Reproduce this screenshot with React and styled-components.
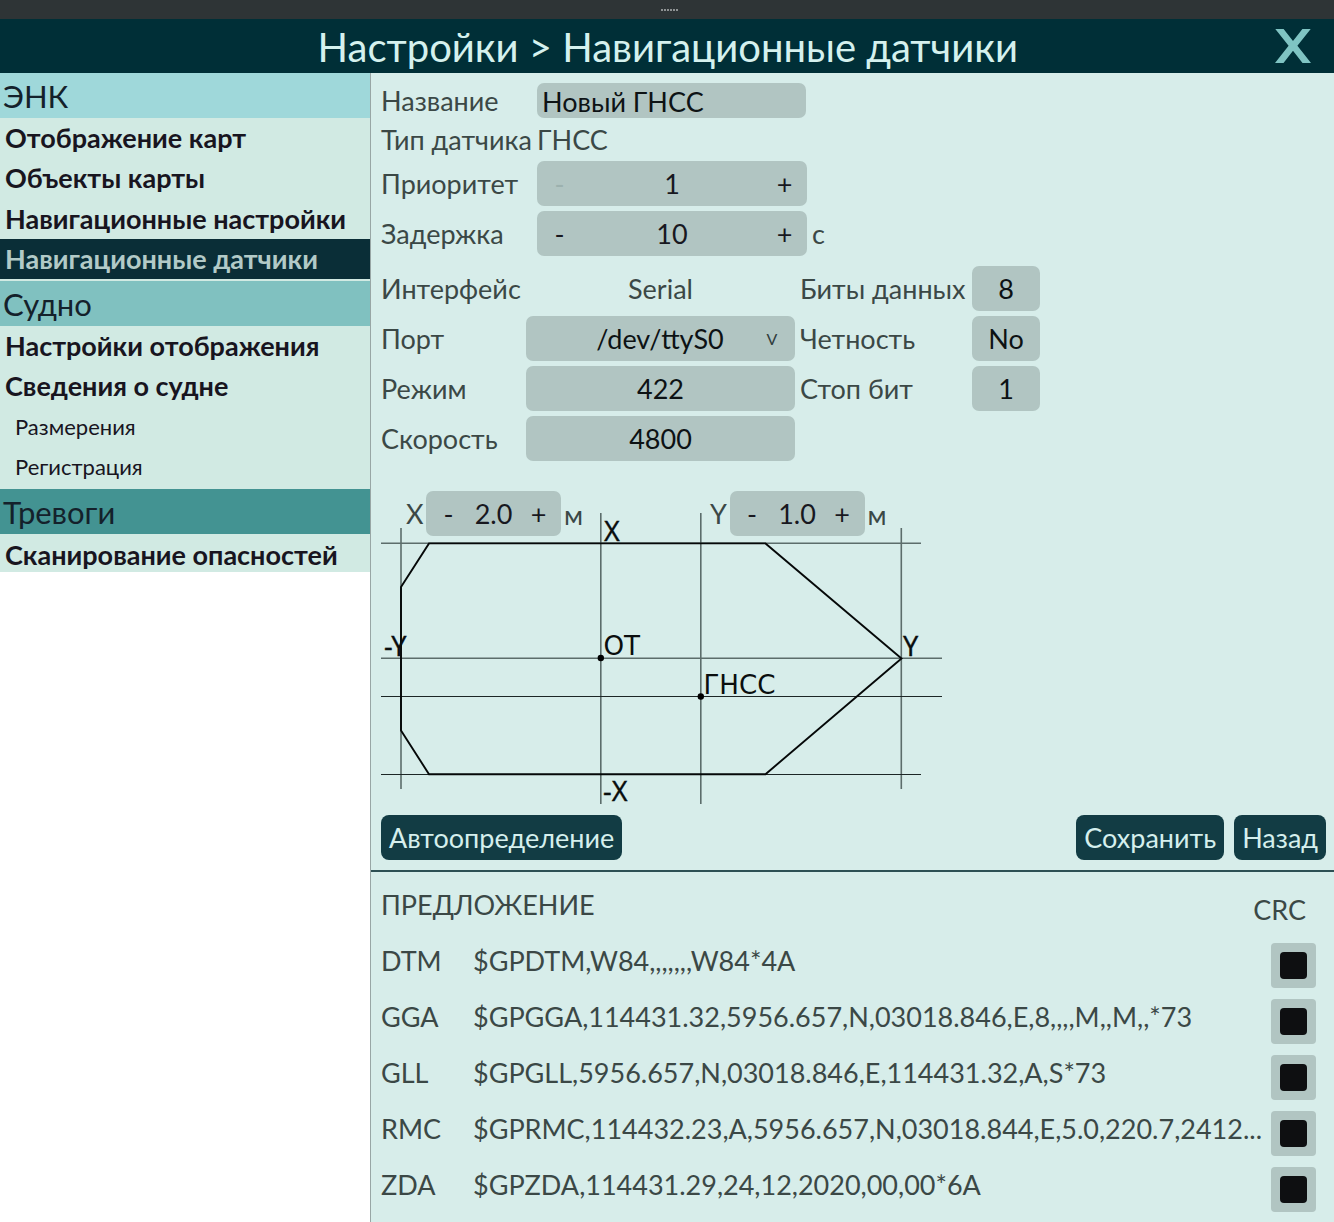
import React, { useState } from "react";
import styled, { createGlobalStyle } from "styled-components";

const GlobalStyle = createGlobalStyle`
  * { box-sizing: border-box; }
  html, body { margin: 0; padding: 0; }
  body {
    width: 1334px;
    height: 1222px;
    overflow: hidden;
    background: #ffffff;
    font-family: Lato, "Noto Sans", sans-serif;
    font-size: 27px;
    color: #3b4846;
  }
  button, input { font: inherit; color: inherit; border: 0; padding: 0; margin: 0; background: none; }
`;

const Screen = styled.div`
  display: flex;
  flex-direction: column;
  width: 1334px;
  height: 1222px;
  overflow: hidden;
`;

const WindowBar = styled.div`
  flex: none;
  display: flex;
  justify-content: center;
  align-items: center;
  gap: 1px;
  height: 19px;
  padding-left: 4px;
  background: #2e3436;
`;

const Grip = styled.i`
  width: 2px;
  height: 2px;
  background: #8e9293;
`;

const Header = styled.header`
  flex: none;
  display: grid;
  grid-template-columns: 1fr 83px;
  height: 54px;
  background: #002f37;
`;

const Title = styled.h1`
  margin: 0;
  padding: 1px 0 0 84.5px;
  text-align: center;
  font-size: 40px;
  line-height: 54px;
  font-weight: 400;
  white-space: nowrap;
  color: #d5f1ee;
`;

const Close = styled.button`
  display: flex;
  justify-content: center;
  align-items: center;
  height: 54px;
  padding-left: 1px;
`;

const Body = styled.div`
  flex: 1;
  display: flex;
  min-height: 0;
`;

const Sidebar = styled.nav`
  flex: none;
  width: 371px;
  border-right: 1px solid #98a6a5;
  background: #ffffff;
`;

const Section = styled.section`
  padding-bottom: ${(p) => (p.$last ? 0 : 2)}px;
  background: #d1eae3;
`;

const SectionTitle = styled.h2`
  margin: 0;
  padding-left: 3px;
  height: 45px;
  line-height: 46px;
  font-size: 31px;
  font-weight: 400;
  color: #14212b;
  background: ${(p) => p.$tone};
`;

const Item = styled.div`
  height: ${(p) => (p.$short ? 38 : 40.25)}px;
  padding-left: ${(p) => (p.$sub ? 15 : 5)}px;
  line-height: ${(p) => (p.$short ? 41 : 40.5)}px;
  font-size: ${(p) => (p.$sub ? 22 : 27)}px;
  font-weight: ${(p) => (p.$sub ? 400 : 700)};
  white-space: nowrap;
  overflow: hidden;
  color: ${(p) => (p.$active ? "#b2cac7" : "#18151f")};
  background: ${(p) => (p.$active ? "#0a2e37" : "transparent")};
`;

const Main = styled.main`
  flex: 1;
  min-width: 0;
  background: #d7edea;
`;

const Settings = styled.section`
  height: 799px;
  padding: 10px 8px 0 10px;
  border-bottom: 2px solid #2d5054;
`;

const General = styled.div`
  display: grid;
  grid-template-columns: 156px 270px auto;
  grid-template-rows: 35px 38px 50px 50px;
  padding-bottom: 10px;
  justify-content: start;
`;

const Label = styled.span`
  line-height: ${(p) => p.$h || 46}px;
  padding-top: ${(p) => p.$drop || 0}px;
  padding-left: ${(p) => p.$indent || 0}px;
  text-align: ${(p) => p.$align || "left"};
  white-space: nowrap;
`;

const NameInput = styled.input`
  width: 269px;
  height: 35px;
  padding: 1px 5px 0;
  border-radius: 7px;
  background: #b1c5c2;
  color: #0e1315;
`;

const Spin = styled.div`
  display: grid;
  grid-template-columns: 45px 1fr 45px;
  width: ${(p) => p.$w}px;
  height: 45px;
  line-height: 45px;
  text-align: center;
  border-radius: 7px;
  background: #b1c5c2;
  color: #18181f;
`;

const SpinButton = styled.button`
  line-height: 45px;
  &:disabled { color: #9cb1ae; }
`;

const Serial = styled.div`
  display: grid;
  grid-template-columns: 145px 269px 5px 172px 68px;
  grid-auto-rows: 45px;
  row-gap: 5px;
  justify-content: start;
`;

const Field = styled.button`
  display: grid;
  grid-template-columns: ${(p) => (p.$drop ? "45px 1fr 46px" : "1fr")};
  align-items: center;
  width: 100%;
  height: 45px;
  border-radius: 7px;
  text-align: center;
  background: #b1c5c2;
  color: #0d1214;
`;

const Arrow = styled.small`
  font-size: 16px;
  color: #323e3e;
`;

const Plan = styled.div`
  position: relative;
  height: 354px;
  padding: 30px 0 0 25px;
`;

const Offsets = styled.div`
  display: grid;
  grid-template-columns: 20px 138px 146px 19.5px 138px auto;
  justify-content: start;
`;

const Drawing = styled.svg`
  position: absolute;
  left: 0;
  top: 50px;
  text {
    font-family: "Noto Sans", sans-serif;
    font-size: 27px;
    fill: #0a0e0e;
    stroke: #0a0e0e;
    stroke-width: 0.3px;
  }
`;

const PointName = styled.text`
  && {
    font-family: "DejaVu Sans", sans-serif;
    font-size: 26.2px;
    stroke: none;
  }
`;

const Actions = styled.div`
  display: flex;
  gap: 10px;
`;

const Action = styled.button`
  height: 45px;
  padding: 0 8px 1px;
  border-radius: 8px;
  white-space: nowrap;
  background: #123c44;
  color: #d5efed;
  &:first-child { margin-right: auto; }
`;

const Log = styled.section`
  display: grid;
  grid-auto-rows: 56px;
  padding: 11px 18px 0 10px;
`;

const LogRow = styled.div`
  display: grid;
  grid-template-columns: 92px 1fr 45px;
  line-height: 44px;
`;

const LogHead = styled.div`
  display: flex;
  justify-content: space-between;
  line-height: 43px;
  padding-right: 10px;
`;

const Sentence = styled.span`
  white-space: nowrap;
`;

const Check = styled.button`
  display: grid;
  place-items: center;
  width: 45px;
  height: 45px;
  margin-top: 4px;
  border-radius: 4px;
  background: #b1c5c2;
  &::after {
    content: "";
    width: 27px;
    height: 27px;
    border-radius: 4px;
    background: #0e0f11;
    visibility: ${(p) => (p.$on ? "visible" : "hidden")};
  }
`;

const menu = [
  { title: "ЭНК", tone: "#9fd8da", items: ["Отображение карт", "Объекты карты", "Навигационные настройки", "Навигационные датчики"] },
  { title: "Судно", tone: "#80c1c0", items: ["Настройки отображения", "Сведения о судне", "-Размерения", "-Регистрация"] },
  { title: "Тревоги", tone: "#439392", items: ["Сканирование опасностей"] },
];

const log = [
  ["DTM", "$GPDTM,W84,,,,,,,W84*4A"],
  ["GGA", "$GPGGA,114431.32,5956.657,N,03018.846,E,8,,,,M,,M,,*73"],
  ["GLL", "$GPGLL,5956.657,N,03018.846,E,114431.32,A,S*73"],
  ["RMC", "$GPRMC,114432.23,A,5956.657,N,03018.844,E,5.0,220.7,2412..."],
  ["ZDA", "$GPZDA,114431.29,24,12,2020,00,00*6A"],
];

function Stepper({ width, value, atMin }) {
  return (
    <Spin $w={width}>
      <SpinButton disabled={atMin}>-</SpinButton>
      <span>{value}</span>
      <SpinButton>+</SpinButton>
    </Spin>
  );
}

function ShipPlan() {
  return (
    <Drawing width="570" height="300" viewBox="381 511 570 300">
      <g stroke="#5c6d6b" strokeWidth="1.6">
        <path d="M381 543.3H921M381 658.2H942M401 528V789M600.8 513V804M700.8 513V804M901.3 528V789" />
      </g>
      <path d="M381 696.5H942M381 774.5H921" stroke="#1c2626" strokeWidth="1" />
      <path d="M401 587L429 543.4H765.5L901.5 658.5L765.5 774.2H429L401 730.5Z" fill="none" stroke="#050808" strokeWidth="1.9" />
      <circle cx="600.8" cy="658" r="3.2" />
      <circle cx="700.8" cy="696.5" r="3.2" />
      <text x="604" y="541">X</text>
      <text x="603" y="801">-X</text>
      <text x="384" y="656" letterSpacing="-1.5">-Y</text>
      <text x="903" y="656">Y</text>
      <PointName x="603.5" y="655">ОТ</PointName>
      <PointName x="703.4" y="693.5">ГНСС</PointName>
    </Drawing>
  );
}

export default function App() {
  const [name, setName] = useState("Новый ГНСС");
  return (
    <Screen>
      <GlobalStyle />
      <WindowBar>{[0, 1, 2, 3, 4, 5].map((n) => <Grip key={n} />)}</WindowBar>
      <Header>
        <Title>Настройки &gt; Навигационные датчики</Title>
        <Close aria-label="Закрыть">
          <svg width="36" height="34" viewBox="0 0 36 34" fill="#7fc4c3">
            <path d="M0.3 0H8.6L18 12L27.4 0H35.7L22.4 16.8L36 34H27.5L18 21.8L8.5 34H0L13.6 16.8Z" />
          </svg>
        </Close>
      </Header>
      <Body>
        <Sidebar>
          {menu.map((s, i) => (
            <Section key={s.title} $last={i === 2}>
              <SectionTitle $tone={s.tone}>{s.title}</SectionTitle>
              {s.items.map((t) => (
                <Item key={t} $sub={t[0] === "-"} $active={t === "Навигационные датчики"} $short={i === 2}>
                  {t.replace("-", "")}
                </Item>
              ))}
            </Section>
          ))}
        </Sidebar>
        <Main>
          <Settings>
            <General>
              <Label $h={35}>Название</Label>
              <NameInput value={name} onChange={(e) => setName(e.target.value)} />
              <span />
              <Label $h={44}>Тип датчика</Label>
              <Label $h={44}>ГНСС</Label>
              <span />
              <Label $drop={5}>Приоритет</Label>
              <Label as="div" $drop={5}><Stepper width={270} value="1" atMin /></Label>
              <span />
              <Label $drop={5}>Задержка</Label>
              <Label as="div" $drop={5}><Stepper width={270} value="10" /></Label>
              <Label $drop={5} $indent={5}>с</Label>
            </General>
            <Serial>
              <Label>Интерфейс</Label><Label $align="center">Serial</Label><span />
              <Label>Биты данных</Label><Field>8</Field>
              <Label>Порт</Label><Field $drop><span /><span>/dev/ttyS0</span><Arrow>V</Arrow></Field><span />
              <Label>Четность</Label><Field>No</Field>
              <Label>Режим</Label><Field>422</Field><span />
              <Label>Стоп бит</Label><Field>1</Field>
              <Label>Скорость</Label><Field>4800</Field>
            </Serial>
            <Plan>
              <ShipPlan />
              <Offsets>
                <Label>X</Label><Stepper width={135} value="2.0" /><Label $h={47}>м</Label>
                <Label>Y</Label><Stepper width={135} value="1.0" /><Label $h={47}>м</Label>
              </Offsets>
            </Plan>
            <Actions>
              <Action>Автоопределение</Action>
              <Action>Сохранить</Action>
              <Action>Назад</Action>
            </Actions>
          </Settings>
          <Log>
            <LogHead><Sentence>ПРЕДЛОЖЕНИЕ</Sentence><Label $drop={5} $h={43}>CRC</Label></LogHead>
            {log.map(([id, text]) => (
              <LogRow key={id}><span>{id}</span><Sentence>{text}</Sentence><Check $on /></LogRow>
            ))}
          </Log>
        </Main>
      </Body>
    </Screen>
  );
}
